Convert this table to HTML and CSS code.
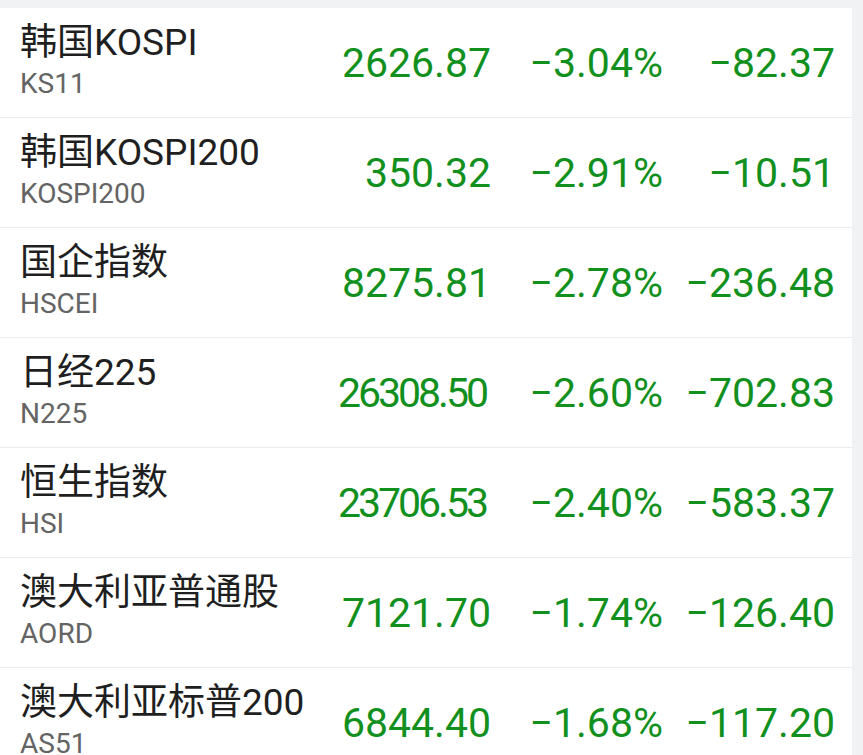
FILE: index.html
```html
<!DOCTYPE html>
<html lang="zh-CN">
<head>
<meta charset="utf-8">
<link rel="stylesheet" href="styles.css">
</head>
<body>
<div class="list">
  <div class="row">
    <div class="name"><div class="title">韩国KOSPI</div><div class="code">KS11</div></div>
    <div class="num">2626.87</div><div class="num">−3.04%</div><div class="num">−82.37</div>
  </div>
  <div class="row">
    <div class="name"><div class="title">韩国KOSPI200</div><div class="code">KOSPI200</div></div>
    <div class="num">350.32</div><div class="num">−2.91%</div><div class="num">−10.51</div>
  </div>
  <div class="row">
    <div class="name"><div class="title">国企指数</div><div class="code">HSCEI</div></div>
    <div class="num">8275.81</div><div class="num">−2.78%</div><div class="num">−236.48</div>
  </div>
  <div class="row">
    <div class="name"><div class="title">日经225</div><div class="code">N225</div></div>
    <div class="num narrow">26308.50</div><div class="num">−2.60%</div><div class="num">−702.83</div>
  </div>
  <div class="row">
    <div class="name"><div class="title">恒生指数</div><div class="code">HSI</div></div>
    <div class="num narrow">23706.53</div><div class="num">−2.40%</div><div class="num">−583.37</div>
  </div>
  <div class="row">
    <div class="name"><div class="title">澳大利亚普通股</div><div class="code">AORD</div></div>
    <div class="num">7121.70</div><div class="num">−1.74%</div><div class="num">−126.40</div>
  </div>
  <div class="row">
    <div class="name"><div class="title">澳大利亚标普200</div><div class="code">AS51</div></div>
    <div class="num">6844.40</div><div class="num">−1.68%</div><div class="num">−117.20</div>
  </div>
</div>
</body>
</html>
```
FILE: styles.css
```css
html, body {
  margin: 0;
  padding: 0;
  background: #f1f2f4;
  overflow: hidden;
}
body {
  font-family: Roboto, "Noto Sans CJK SC", sans-serif;
}
.list {
  margin-top: 8px;
  width: 852px;
  background: #fff;
}
.row {
  display: flex;
  align-items: center;
  height: 109px;
  border-bottom: 1px solid #ebebeb;
  padding-right: 17px;
  box-sizing: content-box;
}
.name {
  flex: 1;
  padding-left: 20px;
  min-width: 0;
  white-space: nowrap;
}
.title {
  font-size: 37px;
  line-height: 44px;
  color: #1f1f1f;
  margin-top: -4px;
}
.code {
  font-size: 28px;
  line-height: 34px;
  margin-top: 2px;
  color: #646464;
}
.num {
  width: 172px;
  text-align: right;
  font-size: 41px;
  color: #12901e;
  white-space: nowrap;
}
.num.narrow {
  letter-spacing: -3px;
  padding-right: 5px;
  box-sizing: border-box;
}
```
